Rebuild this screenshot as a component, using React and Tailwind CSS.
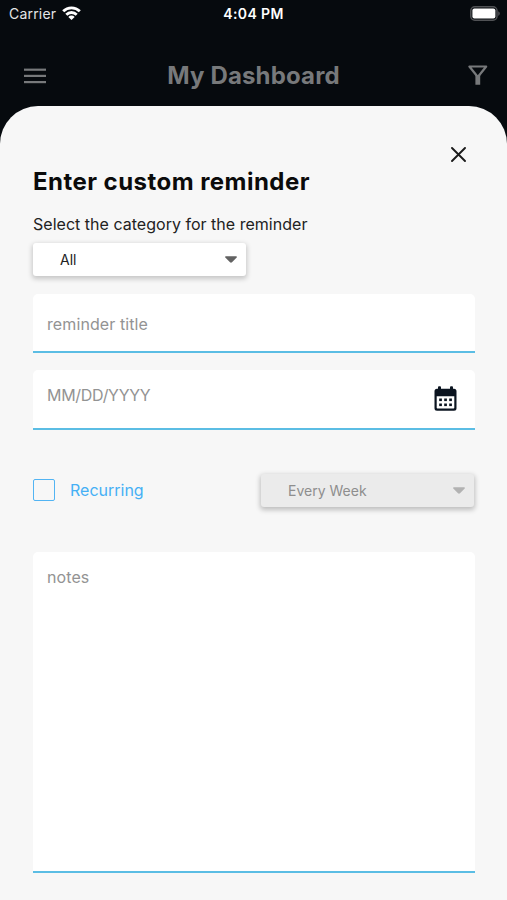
import React, { useState } from 'react';

function StatusBar() {
  return (
    <div className="grid grid-cols-3 items-center h-7 pl-[9px] pr-[7px] text-white">
      <div className="flex items-center gap-[6px]">
        <span className="text-[14px] leading-[28px] tracking-[0.2px] text-[#e4e5e6]">Carrier</span>
        <svg className="w-[19px] h-[14px] mb-[2px] shrink-0" viewBox="0 0 19 14" fill="none" stroke="currentColor" strokeWidth="2.8">
          <path d="M1.2 5.3a11.6 11.6 0 0 1 16.6 0" />
          <path d="M4.3 8.7a7.2 7.2 0 0 1 10.4 0" />
          <path d="M9.5 14L6.3 10.900a4.500 4.500 0 0 1 6.400 0z" fill="currentColor" stroke="none" />
        </svg>
      </div>
      <span className="-ml-[2px] text-center text-[14px] leading-[28px] font-semibold tracking-[0.4px]">4:04 PM</span>
      <svg className="justify-self-end w-[31px] h-[15px] mb-[2px]" viewBox="0 0 31 15" fill="none">
        <rect x="1.8" y="0.8" width="26.2" height="13.4" rx="4" stroke="#505255" strokeWidth="1.5" />
        <rect x="3.4" y="2.6" width="23" height="9.8" rx="2" fill="#fff" />
        <path d="M29.2 5.2c1.1.4 1.6 1.3 1.6 2.3s-.5 1.9-1.6 2.3z" fill="#505255" />
      </svg>
    </div>
  );
}

function Header() {
  return (
    <header className="grid grid-cols-[1fr_auto_1fr] items-center h-[78px] pl-6 pr-[19px] pt-[17px] text-[#77797b]">
      <svg className="w-[22px] h-4" viewBox="0 0 22 16" fill="currentColor">
        <rect width="22" height="2.2" y="0.6" />
        <rect width="22" height="2.2" y="6.8" />
        <rect width="22" height="2.2" y="13" />
      </svg>
      <h1 className="-ml-[5px] pt-[1px] text-[24px] leading-[30px] font-bold tracking-[0.15px]">My Dashboard</h1>
      <svg className="justify-self-end w-5 h-[21px]" viewBox="0 0 20 21" fill="none" stroke="currentColor" strokeWidth="2.2" strokeLinejoin="round">
        <path d="M1.400 1.500h16.800L9.800 12z" />
        <path d="M7.400 9.500L9.800 12l2.400-2.500v10.200H7.400z" fill="currentColor" stroke="none" />
      </svg>
    </header>
  );
}

function Caret() {
  return (
    <svg className="w-[12px] h-[7px]" viewBox="0 0 12 7" fill="currentColor">
      <path d="M0.9 0.3h10.2c.8 0 1.1.8.6 1.3L7 6.2c-.6.6-1.4.6-2 0L.3 1.6C-.2 1.1.1.3.9.3z" />
    </svg>
  );
}

function CalendarIcon() {
  return (
    <svg className="w-[23px] h-[26px] mt-[2px]" viewBox="0 0 23 26" fill="#0b1420">
      <rect x="4" y="0.3" width="3" height="5" rx="1" />
      <rect x="16" y="0.3" width="3" height="5" rx="1" />
      <path
        fillRule="evenodd"
        d="M3 2.800h17a2.500 2.500 0 0 1 2.500 2.500v16.900a2.500 2.500 0 0 1-2.500 2.500H3a2.500 2.500 0 0 1-2.500-2.500V5.300A2.500 2.500 0 0 1 3 2.800zM2.700 10.200v11.600a.7.7 0 0 0 .7.7h16.200a.7.7 0 0 0 .7-.7V10.200z"
      />
      {[5.2, 10.2, 15.2].map((x) => (
        <g key={x}>
          <rect x={x} y="12.5" width="2.7" height="2.6" />
          <rect x={x} y="17.5" width="2.7" height="2.6" />
        </g>
      ))}
    </svg>
  );
}

function Select({ value, disabled }) {
  return (
    <button
      disabled={disabled}
      className={`flex items-center justify-between h-[33px] rounded-[3px] text-[14px] ${
        disabled
          ? 'w-[213px] mr-[1px] pl-[27px] pr-[9px] bg-[#ebebeb] text-[#8e8e8e] shadow-[0_2px_5px_1px_rgba(0,0,0,0.23)]'
          : 'w-[213px] pl-[27px] pr-[9px] bg-white text-[#222] shadow-[0_2px_5px_1px_rgba(0,0,0,0.2)]'
      }`}
    >
      <span>{value}</span>
      <span className={disabled ? 'text-[#b2b2b2]' : 'text-[#626262]'}>
        <Caret />
      </span>
    </button>
  );
}

export default function App() {
  const [recurring, setRecurring] = useState(false);

  return (
    <div className="w-[507px] h-[900px] overflow-hidden bg-[#060a0e] font-['Inter','Liberation_Sans',sans-serif]">
      <StatusBar />
      <Header />

      <main className="h-[794px] rounded-t-[38px] bg-[#f7f7f7] pl-[33px] pr-8">
        <div className="flex justify-end h-[61px] pt-[41px] pr-[9px]">
          <button aria-label="Close" className="h-[15px]">
            <svg className="block w-[15px] h-[15px]" viewBox="0 0 15 15" fill="none" stroke="#1a1a1a" strokeWidth="1.9" strokeLinecap="round">
              <path d="M1 1l13 13M14 1L1 14" />
            </svg>
          </button>
        </div>

        <h2 className="text-[24px] leading-[30px] font-bold tracking-[0.46px] text-[#0b0b0b]">Enter custom reminder</h2>
        <p className="mt-[16px] mb-[8px] text-[16px] leading-[22px] tracking-[0.02px] text-[#222]">Select the category for the reminder</p>
        <Select value="All" />

        <div className="mt-[18px] h-[59px] rounded-t-[5px] border-b-2 border-[#5bbde4] bg-white px-[14px] pt-[19px] text-[16px] leading-[22px] tracking-[0.1px] text-[#939393]">
          reminder title
        </div>

        <div className="flex justify-between mt-[17px] h-[60px] rounded-t-[5px] border-b-2 border-[#5bbde4] bg-white pl-[14px] pr-[18px] pt-[14px] text-[16px] leading-[22px] text-[#939393]">
          <span className="tracking-[-0.3px]">MM/DD/YYYY</span>
          <CalendarIcon />
        </div>

        <div className="flex items-center justify-between mt-11">
          <button className="flex items-center gap-[15px] mb-[2px]" onClick={() => setRecurring(!recurring)}>
            <span className={`w-[22px] h-[22px] rounded-[2px] border-[1.5px] border-[#52b4f3] ${recurring ? 'bg-[#52b4f3]' : ''}`} />
            <span className="text-[16px] leading-[22px] text-[#45b0f5]">Recurring</span>
          </button>
          <Select value="Every Week" disabled />
        </div>

        <div className="mt-[45px] h-[321px] rounded-t-[5px] border-b-2 border-[#5bbde4] bg-white px-[14px] pt-[14px] text-[16px] leading-[22px] tracking-[0.1px] text-[#939393]">
          notes
        </div>
      </main>
    </div>
  );
}
